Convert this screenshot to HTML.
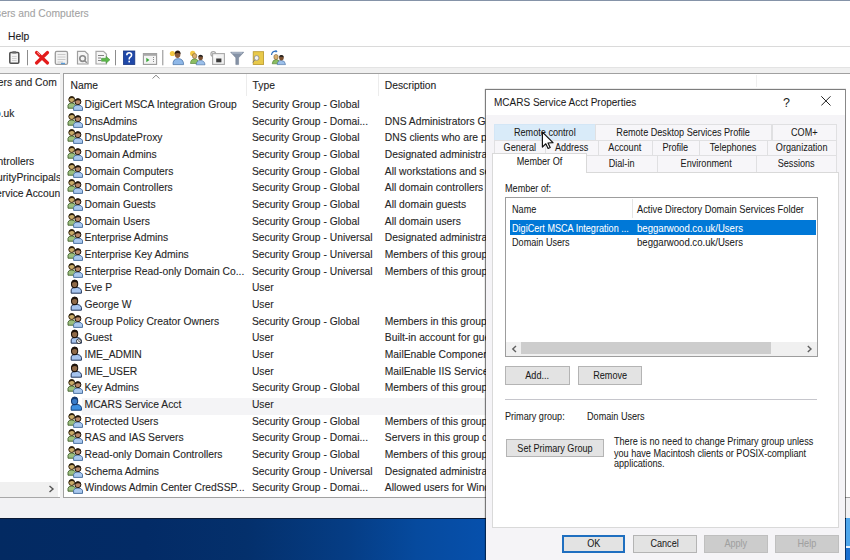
<!DOCTYPE html>
<html><head><meta charset="utf-8"><style>
*{margin:0;padding:0;box-sizing:border-box}
html,body{width:850px;height:560px;overflow:hidden;background:#fff;font-family:"Liberation Sans", sans-serif;color:#1e1e1e}
.t,.row{-webkit-text-stroke:0.1px currentColor}
.row{color:#262626}
.d{-webkit-text-stroke:0.05px currentColor}
.abs{position:absolute}
.t{position:absolute;white-space:nowrap;font-size:10.3px;line-height:12px}
.row{position:absolute;left:0;width:485px;height:16.71px;line-height:16.71px;font-size:10.3px;white-space:nowrap}
.row .ic{position:absolute;left:67px;top:-2.1px;width:16px;height:16px}
.row span{position:absolute;top:0}
.c1{left:84.6px}
.c2{left:251.9px}
.c3{left:384.8px}
.dlg{position:absolute;left:485px;top:88.5px;width:361px;height:480px;background:#f5f4f7;background-clip:padding-box;border:1px solid rgba(0,0,0,0.42);overflow:hidden;box-shadow:-1px 0 0 rgba(0,0,0,0.08),0 -1px 0 rgba(0,0,0,0.08)}
.d{position:absolute;white-space:nowrap;font-size:10.2px;line-height:11px;color:#1a1a1a;transform:scaleX(0.893);transform-origin:0 0;margin-top:-0.8px}
.d[style*="text-align:center"]{transform-origin:50% 0}
.tab{position:absolute;height:16px;border:1px solid #d9d9d9;background:#f0f0f0;font-size:9.1px;line-height:14px;text-align:center;color:#1a1a1a;white-space:nowrap}
.btn{position:absolute;background:#e3e3e3;border:1px solid #b4b4b4;font-size:9.1px;text-align:center;color:#1a1a1a;white-space:nowrap}
</style></head><body>
<svg width="0" height="0" style="position:absolute">
 <defs>
  <g id="gicon">
   <path d="M1 13.2 L1 10.2 Q1.6 8 4.6 8 Q7.8 8 8.6 10.2 L8.6 13.2 Z" fill="#9cbf7e" stroke="#3f5f2a" stroke-width="0.9"/>
   <circle cx="4.7" cy="4.6" r="2.9" fill="#c9ab68" stroke="#3a2a12" stroke-width="1"/>
   <path d="M1.8 4.4 Q2 1.2 4.8 1.3 Q7.6 1.4 7.7 4.4 Q6.4 2.8 4.6 3.1 Q3 3.3 1.8 4.4 Z" fill="#2e2210"/>
   <path d="M6.6 15.4 L6.6 12.3 Q7.2 10 10.8 10 Q14.8 10.2 15.5 12.3 L15.5 15.4 Z" fill="#a9c8ee" stroke="#40689a" stroke-width="0.9"/>
   <circle cx="10.9" cy="6.7" r="3" fill="#b98a6a" stroke="#22160c" stroke-width="1"/>
   <path d="M7.8 6.5 Q8 3.3 10.9 3.4 Q13.9 3.5 14 6.5 Q12.6 5 10.7 5.2 Q9 5.4 7.8 6.5 Z" fill="#22160c"/>
  </g>
  <g id="uicon">
   <path d="M4.2 15.2 L4.2 11.8 Q4.6 9.4 8.5 9.3 Q13.6 9.4 14.4 12.4 L14.4 15.2 Z" fill="#a6c4ee" stroke="#23365a" stroke-width="1"/>
   <ellipse cx="7.6" cy="5.9" rx="3.1" ry="3.7" fill="#8f6a48" stroke="#1e140c" stroke-width="1.1"/>
   <path d="M4.4 5.8 Q4.5 1.7 7.7 1.8 Q10.9 1.9 10.9 5.8 Q9.8 3.9 7.8 4 Q5.6 4.1 4.4 5.8 Z" fill="#1e140c"/>
  </g>
  <g id="guicon">
   <path d="M4.2 15.2 L4.2 11.8 Q4.6 9.4 8.5 9.3 Q13.6 9.4 14.4 12.4 L14.4 15.2 Z" fill="#a6c4ee" stroke="#23365a" stroke-width="1"/>
   <ellipse cx="7.6" cy="5.9" rx="3.1" ry="3.7" fill="#8f6a48" stroke="#1e140c" stroke-width="1.1"/>
   <path d="M4.4 5.8 Q4.5 1.7 7.7 1.8 Q10.9 1.9 10.9 5.8 Q9.8 3.9 7.8 4 Q5.6 4.1 4.4 5.8 Z" fill="#1e140c"/>
   <circle cx="11.8" cy="13.2" r="2.3" fill="#fff" stroke="#222" stroke-width="0.9"/>
   <path d="M11.8 12 L11.8 13.5 L12.8 13.5" stroke="#222" stroke-width="0.7" fill="none"/>
  </g>
  <g id="uselicon">
   <path d="M4.2 15.2 L4.2 11.8 Q4.6 9.4 8.5 9.3 Q13.6 9.4 14.4 12.4 L14.4 15.2 Z" fill="#3d8fe0" stroke="#14407a" stroke-width="1"/>
   <ellipse cx="7.6" cy="5.9" rx="3.1" ry="3.7" fill="#3a7cc8" stroke="#153a70" stroke-width="1.1"/>
   <path d="M4.4 5.8 Q4.5 1.7 7.7 1.8 Q10.9 1.9 10.9 5.8 Q9.8 3.9 7.8 4 Q5.6 4.1 4.4 5.8 Z" fill="#153a70"/>
  </g>
 </defs>
</svg>

<!-- top line -->
<div class="abs" style="left:0;top:0;width:850px;height:1px;background:#8593a8"></div>
<div class="t" style="left:-4px;top:8px;color:#a3a3a3">sers and Computers</div>
<!-- menu -->
<div class="t" style="left:8px;top:30.6px;color:#1a1a1a">Help</div>
<div class="abs" style="left:0;top:46px;width:850px;height:1px;background:#dadada"></div>
<!-- toolbar area -->

<svg class="abs" style="left:0;top:47px" width="300" height="20" viewBox="0 47 300 20">
 <!-- clipboard -->
 <rect x="9.8" y="52.6" width="9" height="10.6" rx="1" fill="#f4f4f4" stroke="#4f4f4f" stroke-width="1.5"/>
 <rect x="12.3" y="51.2" width="4" height="2.4" rx="0.6" fill="#6a6a6a"/>
 <path d="M12 56.5 H16.6 M12 58.5 H16.6 M12 60.5 H16.6" stroke="#c8c8c8" stroke-width="0.8"/>
 <rect x="27" y="50" width="1" height="15.3" fill="#8c8c8c"/>
 <!-- red X -->
 <path d="M36.5 52.5 L47.5 63 M47.5 52.5 L36.5 63" stroke="#e31b1b" stroke-width="3.2" stroke-linecap="round"/>
 <path d="M37 52.2 L40 55" stroke="#f3a0a0" stroke-width="1"/>
 <!-- properties -->
 <rect x="55.3" y="51.4" width="12.2" height="13" rx="1.5" fill="#f2f2f2" stroke="#9a9a9a" stroke-width="1.3"/>
 <path d="M57.5 54.5 H65.5 M57.5 57 H65.5 M57.5 59.5 H65.5 M57.5 62 H63" stroke="#c4c4c4" stroke-width="0.9"/>
 <rect x="61" y="62.8" width="4" height="1.4" fill="#5a9bd8"/>
 <!-- refresh doc -->
 <path d="M77.5 51.3 H85 L88 54.3 V64 H77.5 Z" fill="#f6f6f6" stroke="#a0a0a0" stroke-width="1.2"/>
 <circle cx="82.6" cy="58.6" r="2.8" fill="none" stroke="#8a8a8a" stroke-width="1.6"/>
 <path d="M84.5 60.5 L86.8 62.8" stroke="#8a8a8a" stroke-width="1.4"/>
 <!-- export -->
 <path d="M96 51.3 H103.5 L106.5 54.3 V64 H96 Z" fill="#f6f6f6" stroke="#a8a8a8" stroke-width="1.2"/>
 <path d="M98 55.5 H104 M98 58 H101 M98 60.5 H101" stroke="#666" stroke-width="0.8"/>
 <path d="M101.5 58.3 H106 V56.3 L110 59.8 L106 63.3 V61.3 H101.5 Z" fill="#5cb84a" stroke="#3f8f35" stroke-width="0.5"/>
 <rect x="115" y="50" width="1" height="15.3" fill="#8c8c8c"/>
 <!-- help -->
 <rect x="123.5" y="51" width="11.3" height="13.5" fill="#1f48a8" stroke="#173580" stroke-width="0.8"/>
 <path d="M126.8 55.2 Q126.8 52.7 129.2 52.7 Q131.6 52.7 131.6 55 Q131.6 56.6 129.8 57.5 Q129.2 57.9 129.2 59.4" fill="none" stroke="#fff" stroke-width="1.6"/>
 <rect x="128.4" y="60.7" width="1.6" height="1.7" fill="#fff"/>
 <!-- console -->
 <rect x="143.4" y="53.6" width="13.2" height="10.8" fill="#f4f4f4" stroke="#9a9a9a" stroke-width="1.1"/>
 <rect x="143.4" y="53.6" width="13.2" height="2.2" fill="#a8a8a8"/>
 <path d="M146.3 57.8 L149.5 60 L146.3 62.2 Z" fill="#3aa83a"/>
 <path d="M153.5 57 V63" stroke="#8a8a8a" stroke-width="1" stroke-dasharray="1 1"/>
 <rect x="162.3" y="50" width="1" height="15.3" fill="#8c8c8c"/>
 <!-- new user -->
 <circle cx="172.4" cy="53.5" r="2.6" fill="#f2c744"/>
 <path d="M173 64.6 Q172.6 58.8 178.2 58.6 Q183.6 58.8 183.6 64.6 Z" fill="#8fb8e8" stroke="#3f6aa0" stroke-width="0.7"/>
 <ellipse cx="177.6" cy="54.6" rx="2.8" ry="3.4" fill="#8a5a3a"/>
 <path d="M174.6 54 Q175 50.6 177.8 50.6 Q180.6 50.8 180.6 54.2 Q179 52.6 176.5 53.2 Z" fill="#2a1a10"/>
 <!-- new group -->
 <circle cx="192.7" cy="53.4" r="2.6" fill="#f2c744"/>
 <path d="M190.5 63.5 Q190.6 59 194.8 58.8 Q198.4 59 198.6 63.5 Z" fill="#8cbd62" stroke="#4a7a2a" stroke-width="0.6"/>
 <ellipse cx="194.6" cy="56" rx="2.2" ry="2.6" fill="#d9b070" stroke="#6a4a20" stroke-width="0.5"/>
 <path d="M196.2 64.8 Q196.4 60.4 200.5 60.4 Q204.8 60.6 205 64.8 Z" fill="#9cc0ea" stroke="#3f6aa0" stroke-width="0.6"/>
 <ellipse cx="200.6" cy="57.6" rx="2.3" ry="2.7" fill="#7a5030"/>
 <path d="M198.2 57.2 Q198.5 54.8 200.7 54.8 Q202.9 54.9 203 57.3 Q201.6 56.2 199.7 56.6 Z" fill="#222"/>
 <!-- new OU -->
 <circle cx="213.3" cy="54" r="2.4" fill="#fff" stroke="#a6a6a6" stroke-width="1.2"/>
 <rect x="212.6" y="53.6" width="11.8" height="10.8" fill="#f2f2f2" stroke="#a8a8a8" stroke-width="1.1"/>
 <rect x="213.5" y="55.5" width="3" height="2" fill="#fff"/>
 <rect x="216.2" y="58.5" width="5.2" height="3.8" fill="#3a3a3a"/>
 <!-- filter -->
 <path d="M230.6 52.2 H243.8 L238.6 57.8 V64.6 H235.8 V57.8 Z" fill="#8592a6" stroke="#6d7a8e" stroke-width="0.5"/>
 <path d="M232 53 H242" stroke="#b9c3d2" stroke-width="1"/>
 <!-- find -->
 <rect x="253.2" y="51.7" width="10.4" height="12.8" fill="#e8c94a" stroke="#b8962a" stroke-width="0.8"/>
 <circle cx="256.6" cy="58" r="2.4" fill="#f3f3f3" stroke="#888" stroke-width="0.8"/>
 <path d="M254.8 59.8 L252.8 62.4" stroke="#777" stroke-width="1"/>
 <!-- add to group -->
 <path d="M271.5 55 Q272 51 276.5 51.2" fill="none" stroke="#2f6fbf" stroke-width="1.2"/>
 <path d="M275.5 50 L277.6 51.3 L275.8 52.8 Z" fill="#2f6fbf"/>
 <path d="M272.2 63.8 Q272.4 59.6 276.2 59.4 Q279.8 59.6 280 63.8 Z" fill="#8cbd62" stroke="#4a7a2a" stroke-width="0.6"/>
 <ellipse cx="276" cy="57" rx="2.2" ry="2.6" fill="#d9b070" stroke="#6a4a20" stroke-width="0.5"/>
 <path d="M277.2 64.6 Q277.4 60.4 281.3 60.4 Q285.3 60.6 285.5 64.6 Z" fill="#9cc0ea" stroke="#3f6aa0" stroke-width="0.6"/>
 <ellipse cx="281.4" cy="57.8" rx="2.3" ry="2.7" fill="#7a5030"/>
 <path d="M279 57.4 Q279.3 55 281.5 55 Q283.7 55.1 283.8 57.5 Q282.4 56.4 280.5 56.8 Z" fill="#222"/>
</svg>

<div class="abs" style="left:0;top:67px;width:850px;height:6px;background:#f0f0f0;border-top:1px solid #e3e3e3"></div>

<!-- left pane -->
<div class="abs" style="left:0;top:73px;width:60.5px;height:425px;border:1px solid #a8a8a8;border-left:none;background:#fff;overflow:hidden">
 <div class="t" style="left:-14.8px;top:2.5px">Users and Com</div>
 <div class="t" style="left:-69.7px;top:34px">beggarwood.co.uk</div>
 <div class="t" style="left:-53.9px;top:81.7px">Domain Controllers</div>
 <div class="t" style="left:-55.7px;top:97.7px">ForeignSecurityPrincipals</div>
 <div class="t" style="left:-56.6px;top:113.5px">Managed Service Accounts</div>
 <div class="abs" style="left:0;top:408px;width:58px;height:15px;background:#f0f0f0"></div>
 <svg class="abs" style="left:48px;top:410.5px" width="7" height="8" viewBox="0 0 7 8"><path d="M1.5 1 L5 4 L1.5 7" stroke="#555" stroke-width="1.4" fill="none"/></svg>
</div>
<div class="abs" style="left:60px;top:73px;width:3px;height:425px;background:#f0f0f0"></div>

<!-- right pane -->
<div class="abs" style="left:63px;top:73px;width:800px;height:425px;border:1px solid #a0a0a0;border-right:none;background:#fff;overflow:hidden">
</div>
<div class="t" style="left:70.5px;top:80px">Name</div>
<div class="t" style="left:252.6px;top:80px">Type</div>
<div class="t" style="left:384.8px;top:80px">Description</div>
<svg class="abs" style="left:151px;top:74px" width="10" height="6" viewBox="0 0 10 6"><path d="M1.5 4.5 L5 1.2 L8.5 4.5" stroke="#8a8a8a" stroke-width="1" fill="none"/></svg>
<div class="abs" style="left:245.5px;top:74px;width:1px;height:22px;background:#ececec"></div>
<div class="abs" style="left:378px;top:74px;width:1px;height:22px;background:#ececec"></div>
<div class="abs" style="left:755.5px;top:75px;width:1px;height:12px;background:#efefef"></div>
<div class="row" style="top:97.17px"><div class="ic"><svg width="16" height="16" viewBox="0 0 16 16"><use href="#gicon"/></svg></div><span class="c1">DigiCert MSCA Integration Group</span><span class="c2">Security Group - Global</span><span class="c3"></span></div><div class="row" style="top:113.83px"><div class="ic"><svg width="16" height="16" viewBox="0 0 16 16"><use href="#gicon"/></svg></div><span class="c1">DnsAdmins</span><span class="c2">Security Group - Domai...</span><span class="c3">DNS Administrators Group</span></div><div class="row" style="top:130.49px"><div class="ic"><svg width="16" height="16" viewBox="0 0 16 16"><use href="#gicon"/></svg></div><span class="c1">DnsUpdateProxy</span><span class="c2">Security Group - Global</span><span class="c3">DNS clients who are permitted to perform</span></div><div class="row" style="top:147.14px"><div class="ic"><svg width="16" height="16" viewBox="0 0 16 16"><use href="#gicon"/></svg></div><span class="c1">Domain Admins</span><span class="c2">Security Group - Global</span><span class="c3">Designated administrators of the domain</span></div><div class="row" style="top:163.80px"><div class="ic"><svg width="16" height="16" viewBox="0 0 16 16"><use href="#gicon"/></svg></div><span class="c1">Domain Computers</span><span class="c2">Security Group - Global</span><span class="c3">All workstations and servers joined</span></div><div class="row" style="top:180.46px"><div class="ic"><svg width="16" height="16" viewBox="0 0 16 16"><use href="#gicon"/></svg></div><span class="c1">Domain Controllers</span><span class="c2">Security Group - Global</span><span class="c3">All domain controllers in the domain</span></div><div class="row" style="top:197.12px"><div class="ic"><svg width="16" height="16" viewBox="0 0 16 16"><use href="#gicon"/></svg></div><span class="c1">Domain Guests</span><span class="c2">Security Group - Global</span><span class="c3">All domain guests</span></div><div class="row" style="top:213.78px"><div class="ic"><svg width="16" height="16" viewBox="0 0 16 16"><use href="#gicon"/></svg></div><span class="c1">Domain Users</span><span class="c2">Security Group - Global</span><span class="c3">All domain users</span></div><div class="row" style="top:230.43px"><div class="ic"><svg width="16" height="16" viewBox="0 0 16 16"><use href="#gicon"/></svg></div><span class="c1">Enterprise Admins</span><span class="c2">Security Group - Universal</span><span class="c3">Designated administrators of the enterprise</span></div><div class="row" style="top:247.09px"><div class="ic"><svg width="16" height="16" viewBox="0 0 16 16"><use href="#gicon"/></svg></div><span class="c1">Enterprise Key Admins</span><span class="c2">Security Group - Universal</span><span class="c3">Members of this group can perform</span></div><div class="row" style="top:263.75px"><div class="ic"><svg width="16" height="16" viewBox="0 0 16 16"><use href="#gicon"/></svg></div><span class="c1">Enterprise Read-only Domain Co...</span><span class="c2">Security Group - Universal</span><span class="c3">Members of this group are Read-Only</span></div><div class="row" style="top:280.41px"><div class="ic"><svg width="16" height="16" viewBox="0 0 16 16"><use href="#uicon"/></svg></div><span class="c1">Eve P</span><span class="c2">User</span><span class="c3"></span></div><div class="row" style="top:297.07px"><div class="ic"><svg width="16" height="16" viewBox="0 0 16 16"><use href="#uicon"/></svg></div><span class="c1">George W</span><span class="c2">User</span><span class="c3"></span></div><div class="row" style="top:313.72px"><div class="ic"><svg width="16" height="16" viewBox="0 0 16 16"><use href="#gicon"/></svg></div><span class="c1">Group Policy Creator Owners</span><span class="c2">Security Group - Global</span><span class="c3">Members in this group can modify</span></div><div class="row" style="top:330.38px"><div class="ic"><svg width="16" height="16" viewBox="0 0 16 16"><use href="#guicon"/></svg></div><span class="c1">Guest</span><span class="c2">User</span><span class="c3">Built-in account for guest access</span></div><div class="row" style="top:347.04px"><div class="ic"><svg width="16" height="16" viewBox="0 0 16 16"><use href="#uicon"/></svg></div><span class="c1">IME_ADMIN</span><span class="c2">User</span><span class="c3">MailEnable Component Account</span></div><div class="row" style="top:363.70px"><div class="ic"><svg width="16" height="16" viewBox="0 0 16 16"><use href="#uicon"/></svg></div><span class="c1">IME_USER</span><span class="c2">User</span><span class="c3">MailEnable IIS Service Account</span></div><div class="row" style="top:380.36px"><div class="ic"><svg width="16" height="16" viewBox="0 0 16 16"><use href="#gicon"/></svg></div><span class="c1">Key Admins</span><span class="c2">Security Group - Global</span><span class="c3">Members of this group can perform</span></div><div style="position:absolute;left:82px;top:397.51px;width:420px;height:17px;background:#f4f4f6"></div><div class="row" style="top:397.01px"><div class="ic"><svg width="16" height="16" viewBox="0 0 16 16"><use href="#uselicon"/></svg></div><span class="c1">MCARS Service Acct</span><span class="c2">User</span><span class="c3"></span></div><div class="row" style="top:413.67px"><div class="ic"><svg width="16" height="16" viewBox="0 0 16 16"><use href="#gicon"/></svg></div><span class="c1">Protected Users</span><span class="c2">Security Group - Global</span><span class="c3">Members of this group are afforded</span></div><div class="row" style="top:430.33px"><div class="ic"><svg width="16" height="16" viewBox="0 0 16 16"><use href="#gicon"/></svg></div><span class="c1">RAS and IAS Servers</span><span class="c2">Security Group - Domai...</span><span class="c3">Servers in this group can access</span></div><div class="row" style="top:446.99px"><div class="ic"><svg width="16" height="16" viewBox="0 0 16 16"><use href="#gicon"/></svg></div><span class="c1">Read-only Domain Controllers</span><span class="c2">Security Group - Global</span><span class="c3">Members of this group are Read-Only</span></div><div class="row" style="top:463.65px"><div class="ic"><svg width="16" height="16" viewBox="0 0 16 16"><use href="#gicon"/></svg></div><span class="c1">Schema Admins</span><span class="c2">Security Group - Universal</span><span class="c3">Designated administrators of the schema</span></div><div class="row" style="top:480.30px"><div class="ic"><svg width="16" height="16" viewBox="0 0 16 16"><use href="#gicon"/></svg></div><span class="c1">Windows Admin Center CredSSP...</span><span class="c2">Security Group - Domai...</span><span class="c3">Allowed users for Windows Admin Center</span></div>

<!-- status bar -->
<div class="abs" style="left:0;top:498px;width:850px;height:20px;background:#f2f2f4"></div>
<!-- desktop -->
<div class="abs" style="left:0;top:518px;width:850px;height:42px;background:linear-gradient(90deg,#032a62 0%,#032b66 17%,#04306c 29%,#053d85 41%,#064a9e 49%,#0650ac 57%,#0a60c8 100%)"></div>
<div class="abs" style="left:0;top:518px;width:850px;height:1px;background:#0a1a35"></div>

<!-- dialog -->
<div class="dlg">
 <div class="abs" style="left:0;top:0;width:359px;height:25px;background:#fff"></div>
 <div class="d" style="left:8px;top:8.6px;font-size:10px;line-height:12px;transform:none">MCARS Service Acct Properties</div>
 <div class="d" style="left:297px;top:7.8px;font-size:12.5px;line-height:13px;transform:none;-webkit-text-stroke:0;color:#222">?</div>
 <svg class="abs" style="left:334.5px;top:6.8px" width="10" height="10" viewBox="0 0 10 10"><path d="M0.3 0.3 L9.5 9.5 M9.5 0.3 L0.3 9.5" stroke="#222" stroke-width="1"/></svg>
 <!-- tabs: coordinates relative to dialog (left 486, top 89.5) -->
 <div class="abs" style="left:7.60px;top:34.50px;width:102.70px;height:15.70px;background:#d9ebf9;border:1px solid #e0e0e2;border-bottom:none;border-color:#d3e6f6;"></div><div class="d" style="left:7.60px;top:38.25px;width:101.70px;text-align:center">Remote control</div>
 <div class="abs" style="left:109.30px;top:34.50px;width:177.20px;height:15.70px;background:#f7f6f9;border:1px solid #e0e0e2;border-bottom:none;"></div><div class="d" style="left:109.30px;top:38.25px;width:176.20px;text-align:center">Remote Desktop Services Profile</div>
 <div class="abs" style="left:285.50px;top:34.50px;width:65.50px;height:15.70px;background:#f7f6f9;border:1px solid #e0e0e2;border-bottom:none;"></div><div class="d" style="left:285.50px;top:38.25px;width:64.50px;text-align:center">COM+</div>
 <div class="abs" style="left:7.60px;top:50.00px;width:52.60px;height:15.80px;background:#f7f6f9;border:1px solid #e0e0e2;border-bottom:none;"></div><div class="d" style="left:7.60px;top:53.75px;width:51.60px;text-align:center">General</div>
 <div class="abs" style="left:59.20px;top:50.00px;width:54.20px;height:15.80px;background:#f7f6f9;border:1px solid #e0e0e2;border-bottom:none;"></div><div class="d" style="left:59.20px;top:53.75px;width:53.20px;text-align:center">Address</div>
 <div class="abs" style="left:112.40px;top:50.00px;width:54.60px;height:15.80px;background:#f7f6f9;border:1px solid #e0e0e2;border-bottom:none;"></div><div class="d" style="left:112.40px;top:53.75px;width:53.60px;text-align:center">Account</div>
 <div class="abs" style="left:166.00px;top:50.00px;width:47.60px;height:15.80px;background:#f7f6f9;border:1px solid #e0e0e2;border-bottom:none;"></div><div class="d" style="left:166.00px;top:53.75px;width:46.60px;text-align:center">Profile</div>
 <div class="abs" style="left:212.60px;top:50.00px;width:69.10px;height:15.80px;background:#f7f6f9;border:1px solid #e0e0e2;border-bottom:none;"></div><div class="d" style="left:212.60px;top:53.75px;width:68.10px;text-align:center">Telephones</div>
 <div class="abs" style="left:280.70px;top:50.00px;width:70.30px;height:15.80px;background:#f7f6f9;border:1px solid #e0e0e2;border-bottom:none;"></div><div class="d" style="left:280.70px;top:53.75px;width:69.30px;text-align:center">Organization</div>
 <div class="abs" style="left:100.10px;top:65.80px;width:72.20px;height:16.70px;background:#f7f6f9;border:1px solid #e0e0e2;border-bottom:none;"></div><div class="d" style="left:100.10px;top:69.15px;width:71.20px;text-align:center">Dial-in</div>
 <div class="abs" style="left:171.30px;top:65.80px;width:99.30px;height:16.70px;background:#f7f6f9;border:1px solid #e0e0e2;border-bottom:none;"></div><div class="d" style="left:171.30px;top:69.15px;width:98.30px;text-align:center">Environment</div>
 <div class="abs" style="left:269.60px;top:65.80px;width:81.40px;height:16.70px;background:#f7f6f9;border:1px solid #e0e0e2;border-bottom:none;"></div><div class="d" style="left:269.60px;top:69.15px;width:80.40px;text-align:center">Sessions</div>
 <!-- page -->
 <div class="abs" style="left:5.5px;top:82.5px;width:347px;height:356px;background:#fff;border:1px solid #d9d9d9"></div>
 <div class="abs" style="left:5.5px;top:63.5px;width:95px;height:20px;background:#fff;border:1px solid #d9d9d9;border-bottom:none"></div>
 <div class="d" style="left:5.5px;top:67.5px;width:95px;text-align:center">Member Of</div>
 <div class="d" style="left:19.20px;top:94.35px;">Member of:</div>
 <div class="abs" style="left:18.70px;top:107.90px;width:313.3px;height:159.6px;background:#fff;border:1px solid #9d9d9d"></div>
 <div class="d" style="left:26.10px;top:115.25px;">Name</div>
 <div class="abs" style="left:145.80px;top:109.50px;width:1px;height:19px;background:#e5e5e5"></div>
 <div class="d" style="left:151.00px;top:115.25px;transform:scaleX(0.913);">Active Directory Domain Services Folder</div>
 <div class="abs" style="left:23.60px;top:130.90px;width:306.4px;height:14.2px;background:#0078d7"></div>
 <div class="d" style="left:26.10px;top:134.15px;color:#fff;">DigiCert MSCA Integration ...</div>
 <div class="d" style="left:151.00px;top:134.15px;color:#fff;transform:scaleX(0.94);">beggarwood.co.uk/Users</div>
 <div class="d" style="left:26.10px;top:148.25px;">Domain Users</div>
 <div class="d" style="left:151.00px;top:148.25px;transform:scaleX(0.94);">beggarwood.co.uk/Users</div>
 <div class="abs" style="left:19.70px;top:252.20px;width:311.3px;height:14.5px;background:#f0f0f0"></div>
 <div class="abs" style="left:35.40px;top:252.80px;width:249.4px;height:12.2px;background:#cdcdcd"></div>
 <svg class="abs" style="left:24.50px;top:255.00px" width="7" height="8" viewBox="0 0 7 8"><path d="M5 1 L1.8 4 L5 7" stroke="#606060" stroke-width="1.4" fill="none"/></svg>
 <svg class="abs" style="left:320.00px;top:255.00px" width="7" height="8" viewBox="0 0 7 8"><path d="M1.8 1 L5 4 L1.8 7" stroke="#606060" stroke-width="1.4" fill="none"/></svg>
 <div class="btn" style="left:19.40px;top:276.60px;width:64.30px;height:18.50px;"></div><div class="d" style="left:19.40px;top:281.15px;width:64.30px;text-align:center;">Add...</div>
 <div class="btn" style="left:91.50px;top:276.60px;width:64.30px;height:18.50px;"></div><div class="d" style="left:91.50px;top:281.15px;width:64.30px;text-align:center;">Remove</div>
 <div class="abs" style="left:19.00px;top:309.00px;width:312.4px;height:1.5px;background:#c6c6cc"></div>
 <div class="d" style="left:19.00px;top:321.95px;">Primary group:</div>
 <div class="d" style="left:101.40px;top:321.95px;">Domain Users</div>
 <div class="btn" style="left:20.00px;top:349.50px;width:98.00px;height:18.00px;"></div><div class="d" style="left:20.00px;top:354.25px;width:98.00px;text-align:center;">Set Primary Group</div>
 <div class="d" style="left:128.20px;top:347.65px;">There is no need to change Primary group unless</div>
 <div class="d" style="left:128.20px;top:358.95px;">you have Macintosh clients or POSIX-compliant</div>
 <div class="d" style="left:128.20px;top:369.75px;">applications.</div>
 <div class="btn" style="left:75.90px;top:445.70px;width:63.50px;height:17.80px;border:2px solid #1f6fc0;"></div><div class="d" style="left:75.90px;top:449.45px;width:63.50px;text-align:center;">OK</div>
 <div class="btn" style="left:147.40px;top:445.70px;width:63.20px;height:17.80px;"></div><div class="d" style="left:147.40px;top:449.45px;width:63.20px;text-align:center;">Cancel</div>
 <div class="btn" style="left:218.00px;top:445.70px;width:63.60px;height:17.80px;background:#cccccc;border-color:#bfbfbf;/*dis*/"></div><div class="d" style="left:218.00px;top:449.45px;width:63.60px;text-align:center;color:#a0a0a0;">Apply</div>
 <div class="btn" style="left:289.20px;top:445.70px;width:63.80px;height:17.80px;background:#cccccc;border-color:#bfbfbf;/*dis*/"></div><div class="d" style="left:289.20px;top:449.45px;width:63.80px;text-align:center;color:#a0a0a0;">Help</div>
</div>
<svg class="abs" style="left:541px;top:130.5px" width="14" height="20" viewBox="-1.4 -1.1 14 20"><path d="M0 0 L0 15 L3.4 11.7 L5.7 16.4 L7.8 15.4 L5.6 10.9 L10.6 10.6 Z" fill="#fff" stroke="#111" stroke-width="1.2" stroke-linejoin="round"/></svg>
<div class="abs" style="left:846px;top:497px;width:4px;height:1px;background:#a0a0a0"></div>
<div class="abs" style="left:846px;top:518px;width:4px;height:28px;background:#4ea6ec"></div>
<div class="abs" style="left:846px;top:546px;width:4px;height:2px;background:#e8f2fc"></div>
<div class="abs" style="left:846px;top:548px;width:4px;height:12px;background:#1a6fd0"></div>
</body></html>
